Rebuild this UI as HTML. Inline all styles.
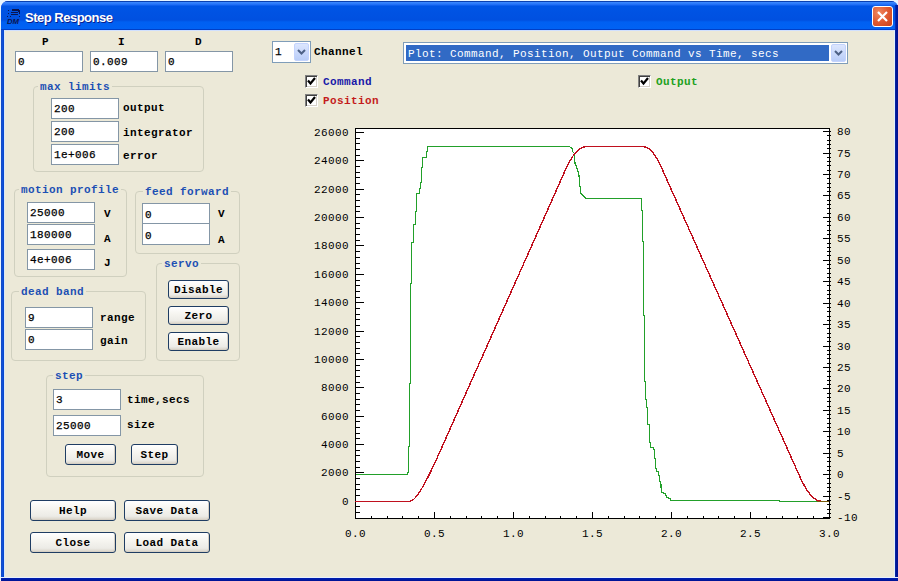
<!DOCTYPE html>
<html><head><meta charset="utf-8"><style>
html,body{margin:0;padding:0;}
body{width:898px;height:581px;overflow:hidden;position:relative;background:#e8eef6;}
div{position:absolute;box-sizing:border-box;}
.t{font-family:"Liberation Mono",monospace;font-size:11px;letter-spacing:0.4px;font-weight:bold;color:#000;white-space:pre;line-height:13px;}
.tb{background:#fff;border:1px solid #8496A6;}
.gb{border:1px solid #D0D0BF;border-radius:4px;}
.gl{color:#0046D5;background:#ECE9D8;padding:0 1px 0 2px;}
.btn{border:1px solid #1F3D63;border-radius:3px;background:linear-gradient(180deg,#FFFFFF 0%,#F6F5F0 40%,#ECEBE6 80%,#D8D2C6 100%);box-shadow:inset -1px -1px 0 #D6D0C5;}
</style></head><body>
<div style="left:0;top:0;width:898px;height:581px;background:#E8F4FF;"></div>
<div style="left:1px;top:1px;width:897px;height:580px;background:#0831D9;border-radius:7px 7px 0 0;"></div>
<div style="left:1px;top:1px;width:897px;height:29px;border-radius:7px 7px 0 0;background:linear-gradient(180deg,#0A40B0 0px,#0A40B0 1px,#3D8BFF 1px,#1C6AF4 4px,#0055E5 5px,#0050E0 19px,#0060F2 21px,#0062F4 28px,#0040C8 28px,#0040C8 29px);"></div>
<div style="left:895px;top:5px;width:3px;height:25px;background:linear-gradient(90deg,#0838C0 0px,#0020A8 1px,#001898 3px);"></div>
<div style="left:1px;top:30px;width:4px;height:551px;background:linear-gradient(90deg,#1040B0 0px,#1658E0 1px,#0848D0 2px,#0848D0 3px,#D8E8F8 3px);"></div>
<div style="left:895px;top:30px;width:3px;height:551px;background:linear-gradient(90deg,#1030A0 0px,#00189C 1px,#001090 3px);"></div>
<div style="left:1px;top:577px;width:897px;height:4px;background:linear-gradient(180deg,#E6F0FF 0px,#E6F0FF 1px,#0020B0 1px,#0018A0 3px,#001090 4px);"></div>
<div style="left:4px;top:30px;width:891px;height:548px;background:#ECE9D8;border-top:1px solid #D0E0FF;border-left:1px solid #D8E8F8;border-right:1px solid #E0F0FF;border-bottom:1px solid #E6F0FF;"></div>
<div style="left:25px;top:10px;font-family:'Liberation Sans',sans-serif;font-weight:bold;font-size:13px;letter-spacing:-0.5px;color:#fff;line-height:15px;white-space:pre;text-shadow:1px 1px 0 #0A1E8C;">Step Response</div>
<svg style="position:absolute;left:0;top:0" width="24" height="28" viewBox="0 0 24 28" shape-rendering="crispEdges"><g fill="#0A1450">
<rect x="12" y="9" width="7" height="1.5"/><rect x="18" y="10" width="1.5" height="2"/><rect x="18.5" y="12" width="1.5" height="2"/>
<rect x="11" y="12" width="1.5" height="1"/><rect x="13" y="11.5" width="3" height="1.2"/><rect x="15.5" y="12" width="2" height="1"/>
<rect x="11" y="14" width="7" height="1.3"/>
<rect x="8" y="10" width="1.3" height="1.3"/><rect x="8" y="13" width="1.3" height="1.3"/><rect x="7" y="15.5" width="1.3" height="1.3"/><rect x="9.5" y="16" width="1.5" height="1"/><rect x="18.5" y="15.5" width="1.3" height="1.5"/>
</g><text x="7" y="24" font-family="Liberation Sans" font-size="6.5" font-weight="bold" font-style="italic" fill="#0A1450" textLength="12" lengthAdjust="spacingAndGlyphs">DM</text></svg>
<div style="left:872px;top:6px;width:21px;height:21px;border:1px solid #fff;border-radius:3px;background:radial-gradient(circle at 30% 30%,#F08860 0%,#E05A30 50%,#C8401A 100%);"><svg width="19" height="19" viewBox="0 0 19 19" style="position:absolute;left:0;top:0"><path d="M5 5L14 14M14 5L5 14" stroke="#fff" stroke-width="2.2"/></svg></div>
<div class="t" style="left:42px;top:36px;">P</div>
<div class="t" style="left:118px;top:36px;">I</div>
<div class="t" style="left:195px;top:36px;">D</div>
<div class="tb" style="left:15px;top:51px;width:68px;height:21px;"></div>
<div class="t" style="left:18px;top:56px;font-weight:normal;-webkit-text-stroke:0.25px #000;">0</div>
<div class="tb" style="left:90px;top:51px;width:68px;height:21px;"></div>
<div class="t" style="left:93px;top:56px;font-weight:normal;-webkit-text-stroke:0.25px #000;">0.009</div>
<div class="tb" style="left:165px;top:51px;width:68px;height:21px;"></div>
<div class="t" style="left:168px;top:56px;font-weight:normal;-webkit-text-stroke:0.25px #000;">0</div>
<div class="gb" style="left:33px;top:86px;width:171px;height:86px;"></div>
<div class="t" style="left:38px;top:81px;color:#1C50B4;background:#ECE9D8;padding:0 2px;">max limits</div>
<div class="tb" style="left:51px;top:98px;width:68px;height:21px;"></div>
<div class="t" style="left:54px;top:103px;font-weight:normal;-webkit-text-stroke:0.25px #000;">200</div>
<div class="tb" style="left:51px;top:121px;width:68px;height:21px;"></div>
<div class="t" style="left:54px;top:126px;font-weight:normal;-webkit-text-stroke:0.25px #000;">200</div>
<div class="tb" style="left:51px;top:144px;width:68px;height:21px;"></div>
<div class="t" style="left:54px;top:149px;font-weight:normal;-webkit-text-stroke:0.25px #000;">1e+006</div>
<div class="t" style="left:123px;top:102px;">output</div>
<div class="t" style="left:123px;top:127px;">integrator</div>
<div class="t" style="left:123px;top:150px;">error</div>
<div class="gb" style="left:14px;top:189px;width:113px;height:88px;"></div>
<div class="t" style="left:19px;top:184px;color:#1C50B4;background:#ECE9D8;padding:0 2px;">motion profile</div>
<div class="tb" style="left:27px;top:202px;width:68px;height:21px;"></div>
<div class="t" style="left:30px;top:207px;font-weight:normal;-webkit-text-stroke:0.25px #000;">25000</div>
<div class="tb" style="left:27px;top:224px;width:68px;height:21px;"></div>
<div class="t" style="left:30px;top:229px;font-weight:normal;-webkit-text-stroke:0.25px #000;">180000</div>
<div class="tb" style="left:27px;top:249px;width:68px;height:21px;"></div>
<div class="t" style="left:30px;top:254px;font-weight:normal;-webkit-text-stroke:0.25px #000;">4e+006</div>
<div class="t" style="left:104px;top:208px;">V</div>
<div class="t" style="left:104px;top:233px;">A</div>
<div class="t" style="left:104px;top:257px;">J</div>
<div class="gb" style="left:135px;top:191px;width:105px;height:63px;"></div>
<div class="t" style="left:143px;top:186px;color:#1C50B4;background:#ECE9D8;padding:0 2px;">feed forward</div>
<div class="tb" style="left:142px;top:203px;width:68px;height:21px;"></div>
<div class="t" style="left:145px;top:209px;font-weight:normal;-webkit-text-stroke:0.25px #000;">0</div>
<div class="tb" style="left:142px;top:223px;width:68px;height:22px;"></div>
<div class="t" style="left:145px;top:230px;font-weight:normal;-webkit-text-stroke:0.25px #000;">0</div>
<div class="t" style="left:218px;top:208px;">V</div>
<div class="t" style="left:218px;top:234px;">A</div>
<div class="gb" style="left:156px;top:263px;width:84px;height:98px;"></div>
<div class="t" style="left:162px;top:258px;color:#1C50B4;background:#ECE9D8;padding:0 2px;">servo</div>
<div class="btn" style="left:168px;top:280px;width:61px;height:19px;"></div>
<div class="t" style="left:168px;top:284px;width:61px;text-align:center;">Disable</div>
<div class="btn" style="left:168px;top:306px;width:61px;height:19px;"></div>
<div class="t" style="left:168px;top:310px;width:61px;text-align:center;">Zero</div>
<div class="btn" style="left:168px;top:332px;width:61px;height:19px;"></div>
<div class="t" style="left:168px;top:336px;width:61px;text-align:center;">Enable</div>
<div class="gb" style="left:11px;top:291px;width:135px;height:70px;"></div>
<div class="t" style="left:19px;top:286px;color:#1C50B4;background:#ECE9D8;padding:0 2px;">dead band</div>
<div class="tb" style="left:25px;top:307px;width:68px;height:21px;"></div>
<div class="t" style="left:28px;top:312px;font-weight:normal;-webkit-text-stroke:0.25px #000;">9</div>
<div class="tb" style="left:25px;top:329px;width:68px;height:21px;"></div>
<div class="t" style="left:28px;top:334px;font-weight:normal;-webkit-text-stroke:0.25px #000;">0</div>
<div class="t" style="left:100px;top:312px;">range</div>
<div class="t" style="left:100px;top:335px;">gain</div>
<div class="gb" style="left:46px;top:375px;width:158px;height:102px;"></div>
<div class="t" style="left:53px;top:370px;color:#1C50B4;background:#ECE9D8;padding:0 2px;">step</div>
<div class="tb" style="left:53px;top:389px;width:68px;height:21px;"></div>
<div class="t" style="left:56px;top:394px;font-weight:normal;-webkit-text-stroke:0.25px #000;">3</div>
<div class="tb" style="left:53px;top:415px;width:68px;height:21px;"></div>
<div class="t" style="left:56px;top:420px;font-weight:normal;-webkit-text-stroke:0.25px #000;">25000</div>
<div class="t" style="left:127px;top:394px;">time,secs</div>
<div class="t" style="left:127px;top:419px;">size</div>
<div class="btn" style="left:65px;top:444px;width:51px;height:21px;"></div>
<div class="t" style="left:65px;top:449px;width:51px;text-align:center;">Move</div>
<div class="btn" style="left:131px;top:444px;width:47px;height:21px;"></div>
<div class="t" style="left:131px;top:449px;width:47px;text-align:center;">Step</div>
<div class="btn" style="left:30px;top:500px;width:86px;height:21px;"></div>
<div class="t" style="left:30px;top:505px;width:86px;text-align:center;">Help</div>
<div class="btn" style="left:124px;top:500px;width:86px;height:21px;"></div>
<div class="t" style="left:124px;top:505px;width:86px;text-align:center;">Save Data</div>
<div class="btn" style="left:30px;top:532px;width:86px;height:21px;"></div>
<div class="t" style="left:30px;top:537px;width:86px;text-align:center;">Close</div>
<div class="btn" style="left:124px;top:532px;width:86px;height:21px;"></div>
<div class="t" style="left:124px;top:537px;width:86px;text-align:center;">Load Data</div>
<div style="left:272px;top:41px;width:39px;height:22px;background:#fff;border:1px solid #7F9DB9;"></div>
<div style="left:294px;top:43px;width:15px;height:18px;border-radius:2px;background:linear-gradient(180deg,#DCE6FE,#B9CDF8);border:1px solid #C3D3FD;"></div>
<svg style="position:absolute;left:294px;top:43px" width="15" height="18"><path d="M4 7l3.5 3.5L11 7" fill="none" stroke="#4D6185" stroke-width="2"/></svg>
<div class="t" style="left:275px;top:46px;font-weight:normal;-webkit-text-stroke:0.25px #000;">1</div>
<div class="t" style="left:314px;top:46px;">Channel</div>
<div style="left:403px;top:42px;width:445px;height:22px;background:#fff;border:1px solid #7F9DB9;"></div>
<div style="left:406px;top:45px;width:423px;height:16px;background:#316AC5;"></div>
<div class="t" style="left:408px;top:48px;color:#fff;font-weight:normal;">Plot: Command, Position, Output Command vs Time, secs</div>
<div style="left:831px;top:44px;width:15px;height:18px;border-radius:2px;background:linear-gradient(180deg,#DCE6FE,#B9CDF8);border:1px solid #C3D3FD;"></div>
<svg style="position:absolute;left:831px;top:44px" width="15" height="18"><path d="M4 7l3.5 3.5L11 7" fill="none" stroke="#4D6185" stroke-width="2"/></svg>
<div style="left:305px;top:75px;width:13px;height:13px;background:#fff;border-top:1px solid #808080;border-left:1px solid #808080;border-right:1px solid #fff;border-bottom:1px solid #fff;box-shadow:inset 1px 1px 0 #404040, inset -1px -1px 0 #D4D0C8;"></div>
<svg style="position:absolute;left:305px;top:75px" width="13" height="13"><path d="M3 5.5L5.5 8.5L10 3" fill="none" stroke="#000" stroke-width="2.2"/></svg>
<div class="t" style="left:323px;top:76px;color:#1818A8;">Command</div>
<div style="left:305px;top:94px;width:13px;height:13px;background:#fff;border-top:1px solid #808080;border-left:1px solid #808080;border-right:1px solid #fff;border-bottom:1px solid #fff;box-shadow:inset 1px 1px 0 #404040, inset -1px -1px 0 #D4D0C8;"></div>
<svg style="position:absolute;left:305px;top:94px" width="13" height="13"><path d="M3 5.5L5.5 8.5L10 3" fill="none" stroke="#000" stroke-width="2.2"/></svg>
<div class="t" style="left:323px;top:95px;color:#C41C1C;">Position</div>
<div style="left:638px;top:75px;width:13px;height:13px;background:#fff;border-top:1px solid #808080;border-left:1px solid #808080;border-right:1px solid #fff;border-bottom:1px solid #fff;box-shadow:inset 1px 1px 0 #404040, inset -1px -1px 0 #D4D0C8;"></div>
<svg style="position:absolute;left:638px;top:75px" width="13" height="13"><path d="M3 5.5L5.5 8.5L10 3" fill="none" stroke="#000" stroke-width="2.2"/></svg>
<div class="t" style="left:656px;top:76px;color:#20A020;">Output</div>
<svg style="position:absolute;left:0;top:0" width="898" height="581" viewBox="0 0 898 581">
<rect x="355" y="128" width="475" height="391" fill="#fff"/>
<path d="M355 518.5h5 M355 512.5h5 M355 506.5h5 M355 501.5h9 M355 495.5h5 M355 489.5h5 M355 484.5h5 M355 478.5h5 M355 472.5h9 M355 467.5h5 M355 461.5h5 M355 455.5h5 M355 450.5h5 M355 444.5h9 M355 438.5h5 M355 433.5h5 M355 427.5h5 M355 421.5h5 M355 416.5h9 M355 410.5h5 M355 404.5h5 M355 399.5h5 M355 393.5h5 M355 387.5h9 M355 382.5h5 M355 376.5h5 M355 370.5h5 M355 365.5h5 M355 359.5h9 M355 353.5h5 M355 348.5h5 M355 342.5h5 M355 336.5h5 M355 331.5h9 M355 325.5h5 M355 319.5h5 M355 314.5h5 M355 308.5h5 M355 302.5h9 M355 297.5h5 M355 291.5h5 M355 285.5h5 M355 280.5h5 M355 274.5h9 M355 268.5h5 M355 263.5h5 M355 257.5h5 M355 251.5h5 M355 245.5h9 M355 240.5h5 M355 234.5h5 M355 228.5h5 M355 223.5h5 M355 217.5h9 M355 211.5h5 M355 206.5h5 M355 200.5h5 M355 194.5h5 M355 189.5h9 M355 183.5h5 M355 177.5h5 M355 172.5h5 M355 166.5h5 M355 160.5h9 M355 155.5h5 M355 149.5h5 M355 143.5h5 M355 138.5h5 M355 132.5h9 M823 517.5h8 M827 513.5h4 M827 509.5h4 M827 504.5h4 M827 500.5h4 M823 496.5h8 M827 491.5h4 M827 487.5h4 M827 483.5h4 M827 478.5h4 M823 474.5h8 M827 470.5h4 M827 466.5h4 M827 461.5h4 M827 457.5h4 M823 453.5h8 M827 448.5h4 M827 444.5h4 M827 440.5h4 M827 436.5h4 M823 431.5h8 M827 427.5h4 M827 423.5h4 M827 418.5h4 M827 414.5h4 M823 410.5h8 M827 406.5h4 M827 401.5h4 M827 397.5h4 M827 393.5h4 M823 388.5h8 M827 384.5h4 M827 380.5h4 M827 376.5h4 M827 371.5h4 M823 367.5h8 M827 363.5h4 M827 358.5h4 M827 354.5h4 M827 350.5h4 M823 346.5h8 M827 341.5h4 M827 337.5h4 M827 333.5h4 M827 328.5h4 M823 324.5h8 M827 320.5h4 M827 316.5h4 M827 311.5h4 M827 307.5h4 M823 303.5h8 M827 298.5h4 M827 294.5h4 M827 290.5h4 M827 285.5h4 M823 281.5h8 M827 277.5h4 M827 273.5h4 M827 268.5h4 M827 264.5h4 M823 260.5h8 M827 255.5h4 M827 251.5h4 M827 247.5h4 M827 243.5h4 M823 238.5h8 M827 234.5h4 M827 230.5h4 M827 225.5h4 M827 221.5h4 M823 217.5h8 M827 213.5h4 M827 208.5h4 M827 204.5h4 M827 200.5h4 M823 195.5h8 M827 191.5h4 M827 187.5h4 M827 183.5h4 M827 178.5h4 M823 174.5h8 M827 170.5h4 M827 165.5h4 M827 161.5h4 M827 157.5h4 M823 153.5h8 M827 148.5h4 M827 144.5h4 M827 140.5h4 M827 135.5h4 M823 131.5h8 M355.5 512v6 M371.5 516v2 M387.5 516v2 M402.5 516v2 M418.5 516v2 M434.5 512v6 M450.5 516v2 M466.5 516v2 M481.5 516v2 M497.5 516v2 M513.5 512v6 M529.5 516v2 M545.5 516v2 M560.5 516v2 M576.5 516v2 M592.5 512v6 M608.5 516v2 M624.5 516v2 M639.5 516v2 M655.5 516v2 M671.5 512v6 M687.5 516v2 M703.5 516v2 M718.5 516v2 M734.5 516v2 M750.5 512v6 M766.5 516v2 M782.5 516v2 M797.5 516v2 M813.5 516v2 M829.5 512v6" stroke="#000" stroke-width="1" shape-rendering="crispEdges"/>
<rect x="355.5" y="128.5" width="474" height="390" fill="none" stroke="#000" stroke-width="1" shape-rendering="crispEdges"/>
<polyline points="355.5,474.5 407.5,474.5 407.5,472.5 408.5,472.5 408.5,446.5 409.5,446.5 409.5,383.5 410.5,383.5 410.5,283.5 411.5,283.5 411.5,242.5 413.5,242.5 413.5,224.5 415.5,224.5 415.5,211.5 416.5,211.5 416.5,193.5 419.5,193.5 419.5,188.5 420.5,188.5 420.5,182.5 421.5,182.5 421.5,167.5 422.5,167.5 422.5,157.5 426.5,157.5 426.5,151.5 427.5,151.5 427.5,146.5 569.5,146.5 570.5,147.5 572.5,148.5 572.5,151.5 574.5,153.5 574.5,161.5 575.5,164.5 577.5,169.5 578.5,173.5 579.5,178.5 579.5,186.5 580.5,186.5 580.5,192.5 583.5,196.5 586.5,198.5 641.5,198.5 641.5,210.5 642.5,210.5 642.5,241.5 643.5,241.5 643.5,315.5 644.5,315.5 644.5,381.5 645.5,381.5 645.5,399.5 646.5,399.5 646.5,407.5 647.5,407.5 647.5,424.5 649.5,424.5 649.5,442.5 650.5,442.5 650.5,447.5 653.5,447.5 653.5,449.5 654.5,449.5 654.5,458.5 655.5,458.5 655.5,468.5 656.5,468.5 656.5,471.5 658.5,471.5 658.5,475.5 659.5,475.5 659.5,481.5 660.5,481.5 661.5,490.5 661.5,492.5 665.5,493.5 666.5,497.5 670.5,498.5 670.5,500.5 779.5,500.5 779.5,501.5 816.5,501.5" fill="none" stroke="#22A02A" stroke-width="1.4" shape-rendering="crispEdges"/>
<path d="M355 501.3 H409.8 Q417.5 501.3 436.4 459.5 L565.4 170 Q575.8 146.6 586.2 146.6 H642.8 Q652 146.5 661.2 167 L800 477 Q810.9 501.3 821.8 501.3 H829" fill="none" stroke="#C0101E" stroke-width="1.4" shape-rendering="crispEdges"/>
<path d="M817 501.5H829" stroke="#7A5A08" stroke-width="1.6" shape-rendering="crispEdges"/>
</svg>
<div class="t" style="left:300px;width:49px;text-align:right;top:496px;font-weight:normal;">0</div>
<div class="t" style="left:300px;width:49px;text-align:right;top:467px;font-weight:normal;">2000</div>
<div class="t" style="left:300px;width:49px;text-align:right;top:439px;font-weight:normal;">4000</div>
<div class="t" style="left:300px;width:49px;text-align:right;top:411px;font-weight:normal;">6000</div>
<div class="t" style="left:300px;width:49px;text-align:right;top:382px;font-weight:normal;">8000</div>
<div class="t" style="left:300px;width:49px;text-align:right;top:354px;font-weight:normal;">10000</div>
<div class="t" style="left:300px;width:49px;text-align:right;top:326px;font-weight:normal;">12000</div>
<div class="t" style="left:300px;width:49px;text-align:right;top:297px;font-weight:normal;">14000</div>
<div class="t" style="left:300px;width:49px;text-align:right;top:269px;font-weight:normal;">16000</div>
<div class="t" style="left:300px;width:49px;text-align:right;top:240px;font-weight:normal;">18000</div>
<div class="t" style="left:300px;width:49px;text-align:right;top:212px;font-weight:normal;">20000</div>
<div class="t" style="left:300px;width:49px;text-align:right;top:184px;font-weight:normal;">22000</div>
<div class="t" style="left:300px;width:49px;text-align:right;top:155px;font-weight:normal;">24000</div>
<div class="t" style="left:300px;width:49px;text-align:right;top:127px;font-weight:normal;">26000</div>
<div class="t" style="left:837px;top:512px;font-weight:normal;">-10</div>
<div class="t" style="left:837px;top:491px;font-weight:normal;">-5</div>
<div class="t" style="left:837px;top:469px;font-weight:normal;">0</div>
<div class="t" style="left:837px;top:448px;font-weight:normal;">5</div>
<div class="t" style="left:837px;top:426px;font-weight:normal;">10</div>
<div class="t" style="left:837px;top:405px;font-weight:normal;">15</div>
<div class="t" style="left:837px;top:383px;font-weight:normal;">20</div>
<div class="t" style="left:837px;top:362px;font-weight:normal;">25</div>
<div class="t" style="left:837px;top:341px;font-weight:normal;">30</div>
<div class="t" style="left:837px;top:319px;font-weight:normal;">35</div>
<div class="t" style="left:837px;top:298px;font-weight:normal;">40</div>
<div class="t" style="left:837px;top:276px;font-weight:normal;">45</div>
<div class="t" style="left:837px;top:255px;font-weight:normal;">50</div>
<div class="t" style="left:837px;top:233px;font-weight:normal;">55</div>
<div class="t" style="left:837px;top:212px;font-weight:normal;">60</div>
<div class="t" style="left:837px;top:190px;font-weight:normal;">65</div>
<div class="t" style="left:837px;top:169px;font-weight:normal;">70</div>
<div class="t" style="left:837px;top:148px;font-weight:normal;">75</div>
<div class="t" style="left:837px;top:126px;font-weight:normal;">80</div>
<div class="t" style="left:335.5px;width:40px;text-align:center;top:528px;font-weight:normal;">0.0</div>
<div class="t" style="left:414.5px;width:40px;text-align:center;top:528px;font-weight:normal;">0.5</div>
<div class="t" style="left:493.5px;width:40px;text-align:center;top:528px;font-weight:normal;">1.0</div>
<div class="t" style="left:572.5px;width:40px;text-align:center;top:528px;font-weight:normal;">1.5</div>
<div class="t" style="left:651.5px;width:40px;text-align:center;top:528px;font-weight:normal;">2.0</div>
<div class="t" style="left:730.5px;width:40px;text-align:center;top:528px;font-weight:normal;">2.5</div>
<div class="t" style="left:809.5px;width:40px;text-align:center;top:528px;font-weight:normal;">3.0</div>
</body></html>
